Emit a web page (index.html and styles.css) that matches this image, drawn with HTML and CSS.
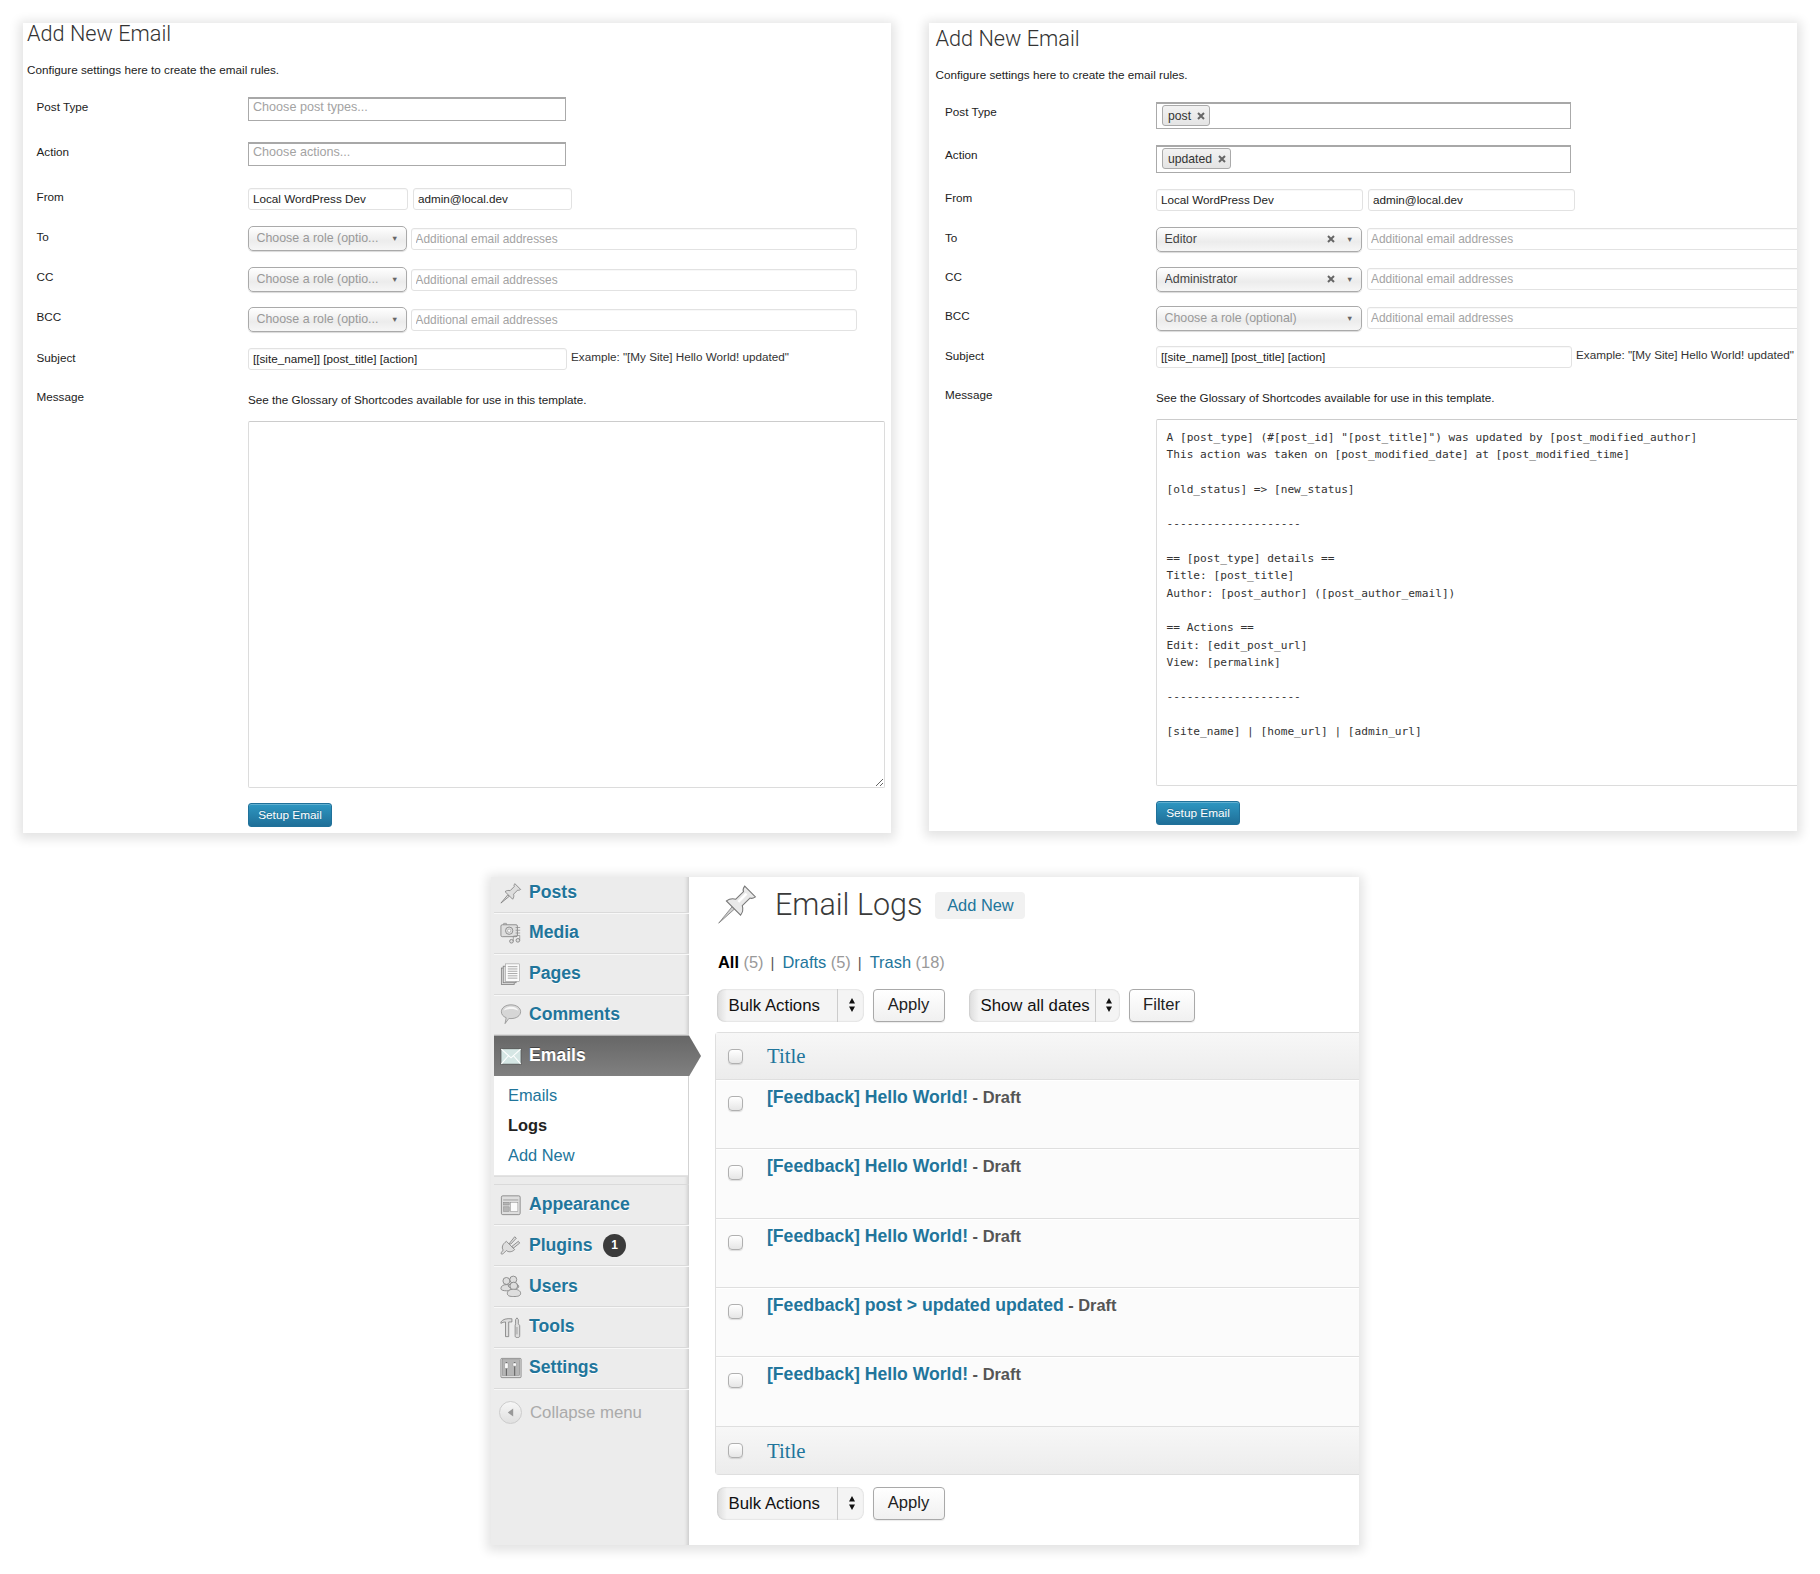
FILE: index.html
```html
<!DOCTYPE html>
<html lang="en">
<head>
<meta charset="utf-8">
<title>Email Logs</title>
<link rel="stylesheet" href="styles.css">
</head>
<body>
<div class="top">
  <section class="form-card blank">
    <h1>Add New Email</h1>
    <p class="intro">Configure settings here to create the email rules.</p>
    <div class="row r-post"><label>Post Type</label><div class="ctl"><input class="multi" placeholder="Choose post types..."></div></div>
    <div class="row r-action"><label>Action</label><div class="ctl"><input class="multi" placeholder="Choose actions..."></div></div>
    <div class="row r-from"><label class="up">From</label><div class="ctl"><input class="text name" value="Local WordPress Dev"><input class="text mail" value="admin@local.dev"></div></div>
    <div class="row r-to"><label class="down">To</label><div class="ctl"><div class="chosen ph"><span class="val">Choose a role (optio...</span><span class="caret">▼</span></div><input class="text extra" placeholder="Additional email addresses"></div></div>
    <div class="row r-cc"><label>CC</label><div class="ctl"><div class="chosen ph"><span class="val">Choose a role (optio...</span><span class="caret">▼</span></div><input class="text extra" placeholder="Additional email addresses"></div></div>
    <div class="row r-bcc"><label>BCC</label><div class="ctl"><div class="chosen ph"><span class="val">Choose a role (optio...</span><span class="caret">▼</span></div><input class="text extra" placeholder="Additional email addresses"></div></div>
    <div class="row r-subject"><label>Subject</label><div class="ctl"><input class="text subject" value="[[site_name]] [post_title] [action]"><span class="example">Example: "[My Site] Hello World! updated"</span></div></div>
    <div class="row r-message"><label>Message</label><div class="msg">
      <p class="gloss">See the Glossary of Shortcodes available for use in this template.</p>
      <textarea class="area" spellcheck="false"></textarea>
      <button class="primary">Setup Email</button>
    </div></div>
  </section>

  <section class="form-card filled">
    <h1>Add New Email</h1>
    <p class="intro">Configure settings here to create the email rules.</p>
    <div class="row r-post"><label>Post Type</label><div class="ctl"><div class="multi tags"><span class="tag">post<svg class="x" viewBox="0 0 8 8"><path d="M1 1l6 6M7 1L1 7"/></svg></span></div></div></div>
    <div class="row r-action"><label>Action</label><div class="ctl"><div class="multi tags"><span class="tag">updated<svg class="x" viewBox="0 0 8 8"><path d="M1 1l6 6M7 1L1 7"/></svg></span></div></div></div>
    <div class="row r-from"><label class="up">From</label><div class="ctl"><input class="text name" value="Local WordPress Dev"><input class="text mail" value="admin@local.dev"></div></div>
    <div class="row r-to"><label class="down">To</label><div class="ctl"><div class="chosen"><span class="val">Editor</span><svg class="x" viewBox="0 0 8 8"><path d="M1 1l6 6M7 1L1 7"/></svg><span class="caret">▼</span></div><input class="text extra" placeholder="Additional email addresses"></div></div>
    <div class="row r-cc"><label>CC</label><div class="ctl"><div class="chosen"><span class="val">Administrator</span><svg class="x" viewBox="0 0 8 8"><path d="M1 1l6 6M7 1L1 7"/></svg><span class="caret">▼</span></div><input class="text extra" placeholder="Additional email addresses"></div></div>
    <div class="row r-bcc"><label>BCC</label><div class="ctl"><div class="chosen ph"><span class="val">Choose a role (optional)</span><span class="caret">▼</span></div><input class="text extra" placeholder="Additional email addresses"></div></div>
    <div class="row r-subject"><label>Subject</label><div class="ctl"><input class="text subject" value="[[site_name]] [post_title] [action]"><span class="example">Example: "[My Site] Hello World! updated"</span></div></div>
    <div class="row r-message"><label>Message</label><div class="msg">
      <p class="gloss">See the Glossary of Shortcodes available for use in this template.</p>
      <textarea class="area" spellcheck="false">A [post_type] (#[post_id] "[post_title]") was updated by [post_modified_author]
This action was taken on [post_modified_date] at [post_modified_time]

[old_status] =&gt; [new_status]

--------------------

== [post_type] details ==
Title: [post_title]
Author: [post_author] ([post_author_email])

== Actions ==
Edit: [edit_post_url]
View: [permalink]

--------------------

[site_name] | [home_url] | [admin_url]</textarea>
      <button class="primary">Setup Email</button>
    </div></div>
  </section>
</div>

<section class="admin">
  <nav class="side">
    <a class="item first"><svg class="ico" viewBox="0 0 24 24"><path class="fl" d="M1 23l7.500-9 1.600 1.600z"/><path class="fl" d="M5.500 10.500c2-1.500 4-1.500 5.500-1l4.500-4.500c-.5-1 0-2.300.7-3.200l6.300 6.300c-1 .7-2.200 1.200-3.200.7l-4.500 4.500c.5 1.500.5 3.500-1 5.500z"/></svg><span>Posts</span></a>
    <a class="item"><svg class="ico" viewBox="0 0 24 24"><rect class="fl" x="1" y="3" width="18" height="13" rx="1.500"/><circle class="fl" cx="10" cy="9.500" r="4"/><circle class="wh" cx="10" cy="9.500" r="1.800"/><path class="ln" d="M4 3V1.500h3V3M17 6h5M17 9h5M17 12h5"/><circle class="fl" cx="12.500" cy="21" r="2"/><circle class="fl" cx="19.500" cy="20" r="2"/><path class="ln" d="M14.500 21v-5.500l7-1V20"/></svg><span>Media</span></a>
    <a class="item"><svg class="ico" viewBox="0 0 24 24"><rect class="fl" x="1.500" y="5.500" width="14" height="18"/><rect class="fl" x="3.500" y="3.500" width="14" height="18"/><rect class="wh" x="6" y="1" width="15.500" height="19"/><path class="ln" d="M8.500 4h10.500M8.500 6.500h10.500M8.500 9h10.500M8.500 11.500h10.500M8.500 14h10.500M8.500 16.500h10.500"/></svg><span>Pages</span></a>
    <a class="item"><svg class="ico" viewBox="0 0 24 24"><path class="bub" d="M12 2c6 0 10.500 3.200 10.500 7.500S18 17 12 17c-1 0-1.500 0-2.300-.2L5.500 22.500 6.700 16C3.300 14.800 1.500 12.300 1.500 9.500 1.500 5.200 6 2 12 2z"/><path class="hl" d="M4 8.500C5 5.500 8 4 12 4s7 1.500 8 4.500c-2-1.500-5-2-8-2s-6 .5-8 2z"/></svg><span>Comments</span></a>
    <a class="item active"><svg class="ico env" viewBox="0 0 24 24"><rect x="1" y="4" width="22" height="17" fill="#d5e6e4" stroke="#555"/><path d="M1.500 4.500L12 14 22.500 4.500M1.500 20.500l7.500-8.500M22.500 20.500L15 12" fill="none" stroke="#fff" stroke-width="1.200"/></svg><span>Emails</span></a>
    <div class="sub">
      <a>Emails</a>
      <a class="cur">Logs</a>
      <a>Add New</a>
    </div>
    <a class="item"><svg class="ico" viewBox="0 0 24 24"><rect class="fl" x="1.500" y="2" width="20.500" height="20.500" rx="1.500"/><path class="ln" d="M3.500 6.500h16.500"/><rect class="dk" x="4" y="9" width="6" height="3"/><rect class="dk" x="4" y="14" width="6" height="5"/><rect class="wh" x="11.500" y="9" width="8" height="10"/></svg><span>Appearance</span></a>
    <a class="item"><svg class="ico" viewBox="0 0 24 24"><path class="fl" d="M7 8l9 9c-3 3-7 3-9 1l-1.500 1.500c-1 1-2.500 2.500-3.500 2.500s-1-1.500 0-2.500L3.500 17.500C1.500 15 2.500 11 7 8z"/><path class="fl" d="M10 10.500l6-7.500 1.800 1.600-6 6.400zM13 13.500l7-5.500 1.500 1.900-6.800 5.400z"/></svg><span>Plugins</span><b class="badge">1</b></a>
    <a class="item"><svg class="ico" viewBox="0 0 24 24"><circle class="fl" cx="7" cy="6.500" r="3.800"/><path class="fl" d="M1 15c0-3 2.500-4.500 6-4.500s6 1.500 6 4.500-12 3-12 0z"/><circle class="fl" cx="14.500" cy="5" r="3.800"/><path class="fl" d="M9 12c1-2 3-3 5.500-3 3.500 0 6 1.500 6 4s-11 2-11.500-1z"/><circle class="fl" cx="15" cy="12" r="4.200"/><path class="fl" d="M8 20c0-3 3-4.500 7-4.500s7.500 1.500 7.500 4.500-3.500 3.500-7.500 3.500S8 23 8 20z"/></svg><span>Users</span></a>
    <a class="item"><svg class="ico" viewBox="0 0 24 24"><path class="fl" d="M1 6.500C3 3.500 7 2.500 13 3v3.500H9.500V22.500h-3.500V6.500c-2 0-3.500 .5-5 1.500z"/><path class="fl" d="M17 8.500V4l1.500-2L20 4v4.500l1.500 2v11c0 1.500-.8 2-2.500 2s-2.500-.5-2.500-2v-11z"/><path class="ln" d="M18.500 12v8"/></svg><span>Tools</span></a>
    <a class="item"><svg class="ico" viewBox="0 0 24 24"><rect class="fl" x="1" y="1.500" width="22" height="21" rx="1"/><rect class="dk" x="2.500" y="3" width="19" height="17"/><path class="ln2" d="M7 5.500v15M16 5.500v15"/><rect class="wh" x="5" y="6.500" width="4" height="6" rx="1"/><rect class="wh" x="14" y="6.500" width="4" height="3.500" rx="1"/></svg><span>Settings</span></a>
    <a class="collapse"><span class="round"><svg viewBox="0 0 10 10"><path d="M2 5l6-4.500v9z"/></svg></span><span>Collapse menu</span></a>
  </nav>
  <main class="main">
    <header class="head">
      <svg class="pin" viewBox="0 0 24 24"><path d="M1 23.500l8-9.800 1.400 1.400z" fill="#d0d0d0" stroke="#808080" stroke-width=".5"/><path d="M5.500 10.500c2-1.500 4-1.500 5.500-1l4.500-4.500c-.5-1 0-2.300.7-3.200l6.300 6.300c-1 .7-2.200 1.200-3.200.7l-4.500 4.500c.5 1.500.5 3.500-1 5.500z" fill="#e9e9e9" stroke="#777" stroke-width=".6"/><path d="M12.500 11l4.800-4.800" stroke="#fff" stroke-width="1.500" fill="none"/></svg>
      <h2>Email Logs</h2>
      <a class="add">Add New</a>
    </header>
    <p class="views"><b>All</b> <i>(5)</i><span class="sep">|</span><a>Drafts</a> <i>(5)</i><span class="sep">|</span><a>Trash</a> <i>(18)</i></p>
    <div class="tools">
      <div class="sel bulk"><span>Bulk Actions</span><svg viewBox="0 0 8 16"><path d="M4 1l3 5.500H1zM4 15L1 9.500h6z"/></svg></div>
      <button class="btn apply">Apply</button>
      <div class="sel dates"><span>Show all dates</span><svg viewBox="0 0 8 16"><path d="M4 1l3 5.500H1zM4 15L1 9.500h6z"/></svg></div>
      <button class="btn filter">Filter</button>
    </div>
    <div class="table">
      <div class="thead"><input type="checkbox" class="cb"><a>Title</a></div>
      <div class="tr"><input type="checkbox" class="cb"><p><a>[Feedback] Hello World!</a><span> - Draft</span></p></div>
      <div class="tr"><input type="checkbox" class="cb"><p><a>[Feedback] Hello World!</a><span> - Draft</span></p></div>
      <div class="tr"><input type="checkbox" class="cb"><p><a>[Feedback] Hello World!</a><span> - Draft</span></p></div>
      <div class="tr"><input type="checkbox" class="cb"><p><a>[Feedback] post &gt; updated updated</a><span> - Draft</span></p></div>
      <div class="tr"><input type="checkbox" class="cb"><p><a>[Feedback] Hello World!</a><span> - Draft</span></p></div>
      <div class="thead tfoot"><input type="checkbox" class="cb"><a>Title</a></div>
    </div>
    <div class="tools lower">
      <div class="sel bulk"><span>Bulk Actions</span><svg viewBox="0 0 8 16"><path d="M4 1l3 5.500H1zM4 15L1 9.500h6z"/></svg></div>
      <button class="btn apply">Apply</button>
    </div>
  </main>
</section>
</body>
</html>
```
FILE: styles.css
```css
* { box-sizing: border-box; }
html, body { margin: 0; padding: 0; background: #fff; }
body { font-family: "Liberation Sans", Arial, sans-serif; color: #222; width: 1820px; height: 1574px; overflow: hidden; }
p, h1, h2 { margin: 0; font-weight: normal; }
a { color: #21759b; }

.top { display: flex; gap: 38px; padding: 23px 0 0 23px; align-items: flex-start; }

.form-card {
  width: 868px; background: #fff;
  box-shadow: 0 2px 10px 4px rgba(0,0,0,.11);
  font-size: 11.7px;
}
.blank { height: 810px; padding-left: 4px; --label: 9.5px; --post: 318px; --name: 160px; --mail: 159px; --sel: 159px; --extra: 446px; --extra-gap: 4px; --subj: 319px; --extra-top: 2px;
  --h-post: 45px; --h-action: 46px; --h-to: 41px; --h-cc: 40px; --h-bcc: 41px; --h-multi: 24px; }
.filled { height: 808px; padding: 5px 0 0 6px; overflow: hidden; --label: 10px; --post: 415px; --name: 207px; --mail: 207px; --sel: 206px; --extra: 500px; --extra-gap: 4.500px; --subj: 416px; --extra-top: 1px;
  --h-post: 43px; --h-action: 44px; --h-to: 40px; --h-cc: 39px; --h-bcc: 40px; --h-multi: 27px; }

h1 { font-family: Roboto, "Liberation Sans", sans-serif; font-weight: 300; font-size: 21.7px; line-height: 21px; color: #333; }
.intro { margin: 18px 0 19px; line-height: 16px; color: #222; }
.filled h1, .filled .intro { padding-left: .5px; }

.row { display: grid; grid-template-columns: 221px 1fr; align-items: start; }
.row > label { display: block; padding-left: var(--label); line-height: 20px; color: #222; }
.row > label.up { line-height: 18px; }
.row > label.down { line-height: 22px; }
.ctl { display: flex; align-items: flex-start; }
.r-post { height: var(--h-post); }
.r-action { height: var(--h-action); }
.r-from { height: 38px; }
.r-to { height: var(--h-to); }
.r-cc { height: var(--h-cc); }
.r-bcc { height: var(--h-bcc); }
.r-subject { height: 39px; }

input, textarea, button { font-family: inherit; margin: 0; }
input::placeholder { color: #a3a3a3; opacity: 1; }

.multi {
  display: block; width: var(--post); height: var(--h-multi); padding: 0 4px 6px;
  font-size: 12.6px; border: 1px solid #aaa; border-top: 2px solid #a8a8a8; background: #fff; outline: 0;
}
.filled .r-action .multi { height: 28px; }
.tags { padding: 1px 5px; }
.tag {
  display: inline-flex; align-items: center; gap: 6px; height: 21px; padding: 0 4px 0 5px;
  font-size: 12.2px; color: #333; border: 1px solid #aaa; border-radius: 3px;
  background: linear-gradient(#f2f2f2, #e4e4e4);
}
.x { width: 8px; height: 8px; flex: none; }
.x path { fill: none; stroke: #666; stroke-width: 2; }

.text {
  display: block; height: 22px; padding: 0 4px 1px; font-size: 11.7px; color: #222;
  border: 1px solid #e2e2e2; border-radius: 3px; background: #fff; outline: 0;
  box-shadow: inset 0 1px 1px rgba(0,0,0,.03);
}
.name { width: var(--name); }
.mail { width: var(--mail); margin-left: 5px; }
.extra { width: var(--extra); margin: var(--extra-top) 0 0 var(--extra-gap); padding-left: 3.500px; font-size: 11.9px; }
.subject { width: var(--subj); }
.example { margin-left: 4px; line-height: 18px; color: #333; white-space: nowrap; }

.chosen {
  display: flex; align-items: center; width: var(--sel); height: 25px; flex: none; padding: 0 6px 1px 7.500px;
  font-size: 12.4px; color: #444; border: 1px solid #aaa; border-radius: 5px;
  background: linear-gradient(#fff 0%, #f4f4f4 35%, #ececec 60%, #f6f6f6 100%);
  box-shadow: 0 1px 1px rgba(0,0,0,.15);
}
.chosen.ph { color: #999; }
.val { flex: 1; white-space: nowrap; overflow: hidden; }
.chosen .x { margin-right: 10px; }
.caret { font-size: 7.500px; color: #666; flex: none; padding: 0 1.500px; }

.gloss { margin-top: 5px; line-height: 16px; color: #222; }
.area {
  display: block; margin-top: 13px; width: 637px; height: 367px; padding: 6px 8px;
  font-family: "DejaVu Sans Mono", "Liberation Mono", monospace; font-size: 11.16px; line-height: 17.3px; color: #333;
  border: 1px solid #dcdcdc; border-top-color: #ccc; border-radius: 2px; background: #fff; outline: 0; white-space: pre; overflow: hidden;
}
.filled .area { width: 720px; padding: 9px 9.500px; }
.primary {
  display: block; margin-top: 15px; width: 84px; height: 24px; padding: 0; font-size: 11.8px; font-weight: normal; color: #fff;
  border: 1px solid #20719a; border-radius: 3px; background: linear-gradient(#2e97c2, #1f6f98);
  text-shadow: 0 -1px 0 rgba(0,0,0,.2); box-shadow: inset 0 1px 0 rgba(255,255,255,.25);
}

.admin {
  display: flex; width: 868px; height: 668px; margin: 44px 0 0 491px; background: #fff;
  box-shadow: 0 2px 10px 4px rgba(0,0,0,.11); overflow: hidden; font-size: 16.4px;
}
.side { width: 198px; flex: none; padding-left: 3px; background: #ececec; box-shadow: inset -5px 0 4px -4px rgba(0,0,0,.18); position: relative; }
.item {
  display: flex; align-items: center; gap: 7px; height: 40.8px; padding: 0 0 0 6px;
  font-size: 17.6px; font-weight: bold; color: #21759b;
  border-bottom: 1px solid #dadada; box-shadow: 0 1px 0 #f8f8f8; text-shadow: 0 1px 0 #fff;
}
.first { height: 36px; padding-bottom: 4px; }
.ico { width: 22px; height: 22px; flex: none; }
.fl { fill: #dedede; stroke: #808080; stroke-width: .9; }
.bub { fill: #d6d6d6; stroke: #8a8a8a; stroke-width: .8; }
.ln { fill: none; stroke: #8a8a8a; stroke-width: .8; }
.ln2 { fill: none; stroke: #666; stroke-width: 1.2; }
.hl { fill: #f7f7f7; stroke: none; }
.dk { fill: #b5b5b5; stroke: #808080; stroke-width: .5; }
.wh { fill: #fbfbfb; stroke: #808080; stroke-width: .5; }
.active {
  position: relative; z-index: 2; margin-right: -12px; border-bottom: 0; box-shadow: none; color: #fff; height: 41px;
  background: linear-gradient(#666, #808080);
  clip-path: polygon(0 0, 195px 0, 100% 50%, 195px 100%, 0 100%);
  text-shadow: 0 -1px 0 #444;
}
.sub { display: flex; flex-direction: column; height: 100px; width: 194px; padding: 5px 0 0 14px; background: #fff; box-shadow: 0 1px 0 #ddd; margin-bottom: 8px; border-bottom: 1px solid #e4e4e4; }
.sub a { line-height: 29.800px; font-size: 16.4px; }
.sub .cur { font-weight: bold; color: #222; }
.sub + .item { border-top: 1px solid #dadada; height: 41px; }
.badge {
  display: flex; align-items: center; justify-content: center; width: 23px; height: 23px; margin-left: 3.500px; border-radius: 50%;
  background: #3b3b3b; color: #fff; font-size: 12px; text-shadow: none;
}
.collapse { display: flex; align-items: center; gap: 8px; padding: 12.500px 0 0 5px; font-size: 16.8px; color: #aaa; }
.round { display: flex; align-items: center; justify-content: center; width: 23px; height: 23px; border-radius: 50%; border: 1px solid #ccc; background: linear-gradient(#f6f6f6, #e0e0e0); }
.round svg { width: 9px; height: 9px; fill: #999; }

.main { flex: 1; min-width: 0; padding: 0 0 0 27px; }
.head { display: flex; align-items: flex-start; padding: 6px 0 0 1px; height: 60px; }
.pin { width: 41px; height: 41px; flex: none; }
.head h2 { margin: 2px 0 0 17px; font-family: Roboto, "Liberation Sans", sans-serif; font-weight: 300; font-size: 30.500px; line-height: 40px; color: #3a3a3a; }
.add { display: block; margin: 9px 0 0 13px; width: 90px; height: 27px; border-radius: 4px; background: #f1f1f1; text-align: center; line-height: 27px; font-size: 16.4px; }
.views { margin-top: 16px; line-height: 19px; padding-left: 2px; color: #111; }
.views i { font-style: normal; color: #999; }
.views b { color: #000; }
.sep { margin: 0 8px 0 7px; color: #555; font-size: 15px; }
.tools { display: flex; align-items: stretch; height: 33px; margin-top: 17px; padding-left: .5px; }
.sel {
  position: relative; display: flex; align-items: center; height: 33px; padding-left: 12px; padding-bottom: 1px; font-size: 16.8px; color: #111;
  border-radius: 8px; background: linear-gradient(90deg, #dcdcdc 0, #f4f4f4 10px), #f4f4f4; box-shadow: inset 0 0 2px rgba(0,0,0,.2);
}
.sel span { display: block; flex: none; }
.sel svg { width: 8px; height: 16px; fill: #111; flex: none; }
.bulk { width: 147px; }
.bulk span { width: 109.500px; border-right: 1px solid #ccc; line-height: 33px; }
.bulk svg { margin-left: 10px; }
.dates { width: 151px; margin-left: 24px; }
.dates span { width: 115px; border-right: 1px solid #ccc; line-height: 33px; }
.dates svg { margin-left: 9.500px; }
.btn { height: 33px; padding: 0 0 1px; font-size: 16.6px; color: #222; border: 1px solid #a9a9a9; border-radius: 4px; background: linear-gradient(#fff, #f0f0f0); box-shadow: 0 1px 1px rgba(0,0,0,.08); }
.apply { width: 72px; margin-left: 9px; }
.filter { width: 66px; margin-left: 9px; }

.table { margin: 10px -2px 0 -1px; border: 1px solid #dfdfdf; border-right: 0; border-radius: 4px 0 0 4px; }
.thead { display: flex; align-items: center; height: 47px; background: linear-gradient(#f7f7f7, #ececec); border-bottom: 1px solid #dfdfdf; font-family: "Liberation Serif", serif; font-size: 20.8px; padding-left: 12px; }
.tfoot { border-bottom: 0; border-top: 1px solid #dfdfdf; height: 48px; }
.thead a { margin-left: 24px; }
.tr { display: flex; align-items: flex-start; height: 69.3px; padding: 16px 0 0 12px; background: #fbfbfb; border-bottom: 1px solid #dfdfdf; box-shadow: inset 0 1px 0 #fff; }
.tr:nth-of-type(6) { border-bottom: 0; }
.tr p { margin: -9px 0 0 24px; line-height: 20px; font-size: 17.6px; font-weight: bold; }
.tr p span { font-size: 16.4px; color: #555; }
.cb { appearance: none; display: block; width: 15px; height: 15px; margin: 0; flex: none; border: 1px solid #b0b0b0; border-radius: 4px; background: linear-gradient(#fff, #e6e6e6); box-shadow: 0 1px 1px rgba(0,0,0,.12); }
.lower { margin-top: 12px; }
```
